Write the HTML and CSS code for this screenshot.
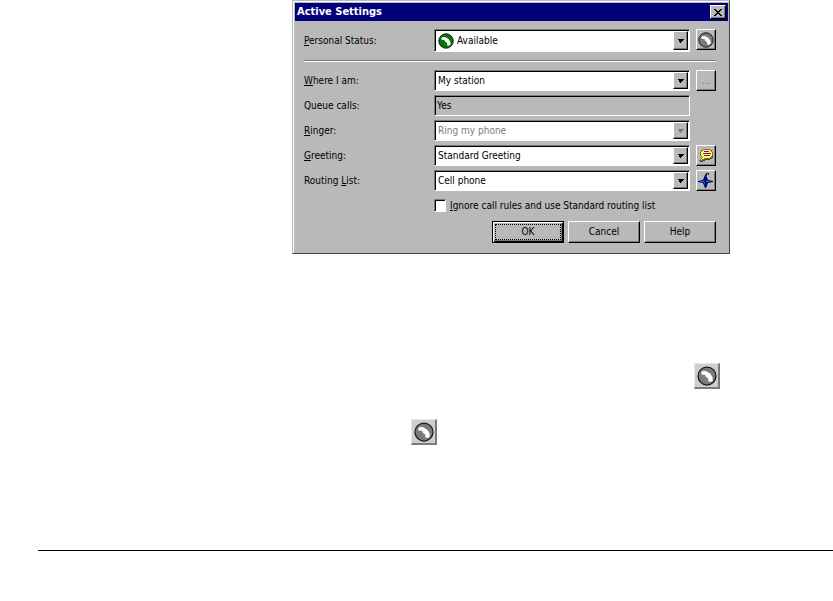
FILE: index.html
```html
<!DOCTYPE html>
<html lang="en">
<head>
    <meta charset="UTF-8">
    <meta name="viewport" content="width=device-width, initial-scale=1.0">
    <title>Active Settings</title>
    <link rel="stylesheet" href="styles.css">
</head>
<body>
    <!-- Shared icons -->
    <svg class="symbols" aria-hidden="true">
        <symbol id="arrow" viewBox="0 0 6 4">
            <path d="M0 0h6v1h-1v1h-1v1h-1v1h-1v-1h-1v-2h-1z"/>
        </symbol>
        <symbol id="phone" viewBox="0 0 16 16">
            <circle cx="8" cy="8" r="7.2" fill="currentColor" stroke="#181818" stroke-width="1"/>
            <path d="M3.500 5l1-1h2.500l1 .5 2.500 1.500 2 3v3l-1 .5h-2l-.5-1v-1.500l-2-1.500-.5-1.500h-2l-1-.5z" fill="#fff"/>
        </symbol>
    </svg>

    <form class="dialog">
        <header class="title-bar">
            <h1>Active Settings</h1>
            <button type="button" class="close-btn" aria-label="Close">
                <svg width="8" height="7" viewBox="0 0 8 7" shape-rendering="crispEdges"><path d="M0 0h2v1h1v1h2v-1h1v-1h2v1h-1v1h-1v1h-1v1h1v1h1v1h1v1h-2v-1h-1v-1h-2v1h-1v1h-2v-1h1v-1h1v-1h1v-1h-1v-1h-1v-1h-1z"/></svg>
            </button>
        </header>

        <div class="settings">
            <div class="row">
                <label for="status"><u>P</u>ersonal Status:</label>
                <div class="combo tall">
                    <svg class="available" width="16" height="16"><use href="#phone"/></svg>
                    <select id="status"><option>Available</option></select>
                    <span class="arrow"><svg width="6" height="4"><use href="#arrow"/></svg></span>
                </div>
                <button type="button" class="side-btn" aria-label="Edit status">
                    <svg class="phone" width="16" height="16"><use href="#phone"/></svg>
                </button>
            </div>

            <hr class="divider">

            <div class="row">
                <label for="where"><u>W</u>here I am:</label>
                <div class="combo">
                    <select id="where"><option>My station</option></select>
                    <span class="arrow"><svg width="6" height="4"><use href="#arrow"/></svg></span>
                </div>
                <button type="button" class="side-btn dots" disabled>...</button>
            </div>
            <div class="row">
                <label for="queue">Queue calls:</label>
                <input id="queue" class="readonly" type="text" value="Yes" readonly>
            </div>
            <div class="row">
                <label for="ringer"><u>R</u>inger:</label>
                <div class="combo disabled">
                    <select id="ringer" disabled><option>Ring my phone</option></select>
                    <span class="arrow"><svg width="6" height="4"><use href="#arrow"/></svg></span>
                </div>
            </div>
            <div class="row">
                <label for="greeting"><u>G</u>reeting:</label>
                <div class="combo">
                    <select id="greeting"><option>Standard Greeting</option></select>
                    <span class="arrow"><svg width="6" height="4"><use href="#arrow"/></svg></span>
                </div>
                <button type="button" class="side-btn" aria-label="Greetings">
                    <svg width="14" height="13" viewBox="0 0 14 13" shape-rendering="crispEdges">
                        <path d="M4 0H11V1H13V3H14V7H13V9H11V10H6V11H4V12H0V11H1V10H2V9H3V8H2V7H1V3H2V1H4Z" fill="#7b7b00"/>
                        <path d="M4 1H11V2H12V3H13V7H12V8H11V9H5V10H3V11H2V10H3V9H4V8H3V7H2V3H3V2H4Z" fill="#ffff7b"/>
                        <path d="M1 12H4V11H6V10H11V9H13V7H14V9H13V10H11V11H6V12H4V13H1Z" fill="#424242"/>
                        <path d="M5 2H10V3H5ZM4 4H12V5H4ZM5 6H11V7H5Z" fill="#94007b"/>
                    </svg>
                </button>
            </div>
            <div class="row">
                <label for="routing">Routing <u>L</u>ist:</label>
                <div class="combo">
                    <select id="routing"><option>Cell phone</option></select>
                    <span class="arrow"><svg width="6" height="4"><use href="#arrow"/></svg></span>
                </div>
                <button type="button" class="side-btn" aria-label="Routing lists">
                    <svg width="16" height="16" viewBox="0 0 16 16">
                        <path d="M7 2H8L10 7L15 8V9L10 10L8 15H7L5 10L0 9V8L5 7Z" fill="#000063"/>
                        <path d="M7 4V8H2L6 7ZM8 9V14L9 9Z" fill="#0000ff"/>
                        <path d="M8 7L9 8H14L9 9H8ZM6 9H7V13ZM2 8H6V9H3Z" fill="#0094b5"/>
                        <path d="M7 3V1H8V0H11V2H10V1H9V3Z" fill="#222"/>
                    </svg>
                </button>
            </div>

            <div class="check-row">
                <input id="ignore" type="checkbox">
                <label for="ignore"><u>I</u>gnore call rules and use Standard routing list</label>
            </div>

            <div class="actions">
                <button type="submit" class="btn default"><span>OK</span></button>
                <button type="button" class="btn"><span>Cancel</span></button>
                <button type="button" class="btn"><span>Help</span></button>
            </div>
        </div>
    </form>

    <main class="notes">
        <p class="note note-right"><button type="button" class="tool" aria-label="Edit status"><svg class="phone" width="20" height="20"><use href="#phone"/></svg></button></p>
        <p class="note note-left"><button type="button" class="tool" aria-label="Edit status"><svg class="phone" width="20" height="20"><use href="#phone"/></svg></button></p>
    </main>

    <hr class="page-rule">
</body>
</html>
```
FILE: styles.css
```css
* {
    box-sizing: border-box;
}
body {
    margin: 0;
    background-color: white;
    color: black;
    font-family: "DejaVu Sans Condensed", "DejaVu Sans", sans-serif;
    font-size: 10px;
    line-height: 12px;
}
button, input, select {
    font: inherit;
    color: inherit;
}
svg {
    display: block;
    flex: none;
}
.symbols {
    display: none;
}
.dialog {
    margin: 0 103px 0 292px;
    padding: 2px 1px 10px 2px;
    background-color: #b9b9b9;
    border: 1px solid #b9b9b9;
    border-right-color: #424242;
    border-bottom-color: #424242;
    box-shadow: inset 1px 1px white;
}
.title-bar {
    display: flex;
    align-items: center;
    justify-content: space-between;
    height: 18px;
    padding: 0 2px;
    background-color: #00007b;
    color: white;
}
.title-bar h1 {
    margin: 0;
    font-size: 11px;
}
.close-btn {
    display: flex;
    align-items: center;
    justify-content: center;
    width: 16px;
    height: 14px;
    padding: 0;
}
.close-btn, .side-btn, .btn, .arrow {
    background-color: #b9b9b9;
    border: 1px solid white;
    border-right-color: black;
    border-bottom-color: black;
    box-shadow: inset -1px -1px #7b7b7b;
}
.settings {
    display: flex;
    flex-direction: column;
    gap: 4px;
    padding: 8px 12px 0 9px;
}
.row {
    display: grid;
    grid-template-columns: 124px 1fr 20px;
    column-gap: 6px;
    align-items: center;
    min-height: 21px;
}
.divider {
    width: 100%;
    height: 2px;
    margin: 4px 0;
    border: 0;
    border-top: 1px solid #7b7b7b;
    border-bottom: 1px solid white;
}
.combo, .readonly {
    display: flex;
    align-items: center;
    width: 100%;
    height: 21px;
    border: 1px solid #7b7b7b;
    border-right-color: white;
    border-bottom-color: white;
    box-shadow: inset 1px 1px black;
}
.combo {
    padding: 1px;
    background-color: white;
}
.combo.tall {
    height: 23px;
}
.combo select {
    flex: 1;
    min-width: 0;
    height: 16px;
    padding: 0 2px;
    appearance: none;
    background: none;
    border: 0;
    outline: 0;
    opacity: 1;
}
.combo.disabled {
    color: #7b7b7b;
}
.arrow {
    display: flex;
    align-items: center;
    justify-content: center;
    align-self: stretch;
    width: 15px;
    pointer-events: none;
}
.arrow svg {
    fill: currentColor;
    shape-rendering: crispEdges;
}
.available {
    margin-left: 2px;
    margin-right: 1px;
    color: #007b00;
}
.phone {
    color: #7b7b7b;
}
.readonly {
    padding: 0 2px;
    background-color: #b9b9b9;
    outline: 0;
}
.side-btn {
    display: flex;
    align-items: center;
    justify-content: center;
    align-self: start;
    width: 20px;
    height: 21px;
    padding: 0;
}
.dots {
    color: #7b7b7b;
}
.check-row {
    display: flex;
    align-items: center;
    gap: 4px;
    margin: 4px 0 0 130px;
}
.check-row input {
    width: 12px;
    height: 13px;
    margin: 0;
    appearance: none;
    background-color: white;
    border: 1px solid #7b7b7b;
    border-right-color: white;
    border-bottom-color: white;
    box-shadow: inset 1px 1px black;
}
.check-row input:checked {
    background-color: black;
}
.actions {
    display: flex;
    justify-content: flex-end;
    gap: 4px;
    margin-top: 5px;
}
.btn {
    width: 72px;
    height: 22px;
    padding: 2px;
}
.btn span {
    display: flex;
    align-items: center;
    justify-content: center;
    height: 100%;
}
.btn.default {
    border: 1px solid black;
    box-shadow: inset 1px 1px white, inset -1px -1px black, inset -2px -2px #7b7b7b;
}
.btn.default span {
    border: 1px dotted black;
}
.notes {
    padding: 109px 113px 0 411px;
}
.note {
    display: flex;
    margin: 0 0 30px;
}
.note-right {
    justify-content: flex-end;
}
.tool {
    display: flex;
    align-items: center;
    justify-content: center;
    width: 26px;
    height: 26px;
    padding: 0;
    background-color: #cecece;
    border: 1px solid #e7e7e7;
    border-right: 2px solid #7b7b7b;
    border-bottom: 2px solid #7b7b7b;
}
.page-rule {
    margin: 105px 0 0 38px;
    border: 0;
    border-top: 1px solid black;
}
```
